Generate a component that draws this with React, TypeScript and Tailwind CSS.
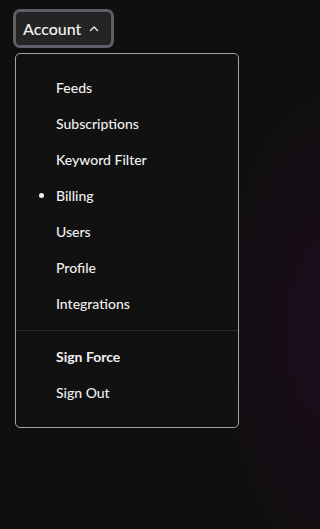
import React from "react";

const items = ["Feeds", "Subscriptions", "Keyword Filter", "Billing", "Users", "Profile", "Integrations"];

export default function App() {
  return (
    <div
      className="min-h-[529px] w-full bg-[#0f0f0f] pt-[9px] pl-[13px] text-[#f2f2f2]"
      style={{
        fontFamily: "Lato, 'Noto Sans', sans-serif",
        backgroundImage:
          "radial-gradient(ellipse 120px 260px at 330px 330px, rgba(40,10,40,0.55), rgba(15,15,15,0) 100%)",
      }}
    >
      <button className="flex h-[39px] items-center gap-[7px] rounded-[7px] border-[3px] border-[#5c6066] bg-[#242424] pl-[7px] pr-[11px] text-[16px] font-medium text-[#f4f4f4]">
        <span>Account</span>
        <svg width="12" height="12" viewBox="0 0 24 24" fill="none" stroke="currentColor" strokeWidth="2.6" strokeLinecap="round" strokeLinejoin="round">
          <path d="M5 15l7-7 7 7" />
        </svg>
      </button>
      <div className="mt-[5px] ml-[2px] w-[224px] rounded-[5px] border border-[#a3a3a3] bg-[#111111]">
        <div className="pt-[16px] pb-[8px]">
          {items.map((it) => (
            <div key={it} className="relative flex h-9 items-center pb-[2px] pl-[40px] text-[14px] font-medium text-[#f0f0f0]">
              {it === "Billing" && (
                <span className="absolute left-[23px] top-[15px] h-[5px] w-[5px] rounded-full bg-[#f0f0f0]" />
              )}
              {it}
            </div>
          ))}
        </div>
        <div className="h-px bg-[#2a2a2a]" />
        <div className="pt-[8px] pb-[16px]">
          <div className="flex h-9 items-center pb-[2px] pl-[40px] text-[14px] font-bold text-[#f0f0f0]">Sign Force</div>
          <div className="flex h-9 items-center pb-[2px] pl-[40px] text-[14px] font-medium text-[#f0f0f0]">Sign Out</div>
        </div>
      </div>
    </div>
  );
}
